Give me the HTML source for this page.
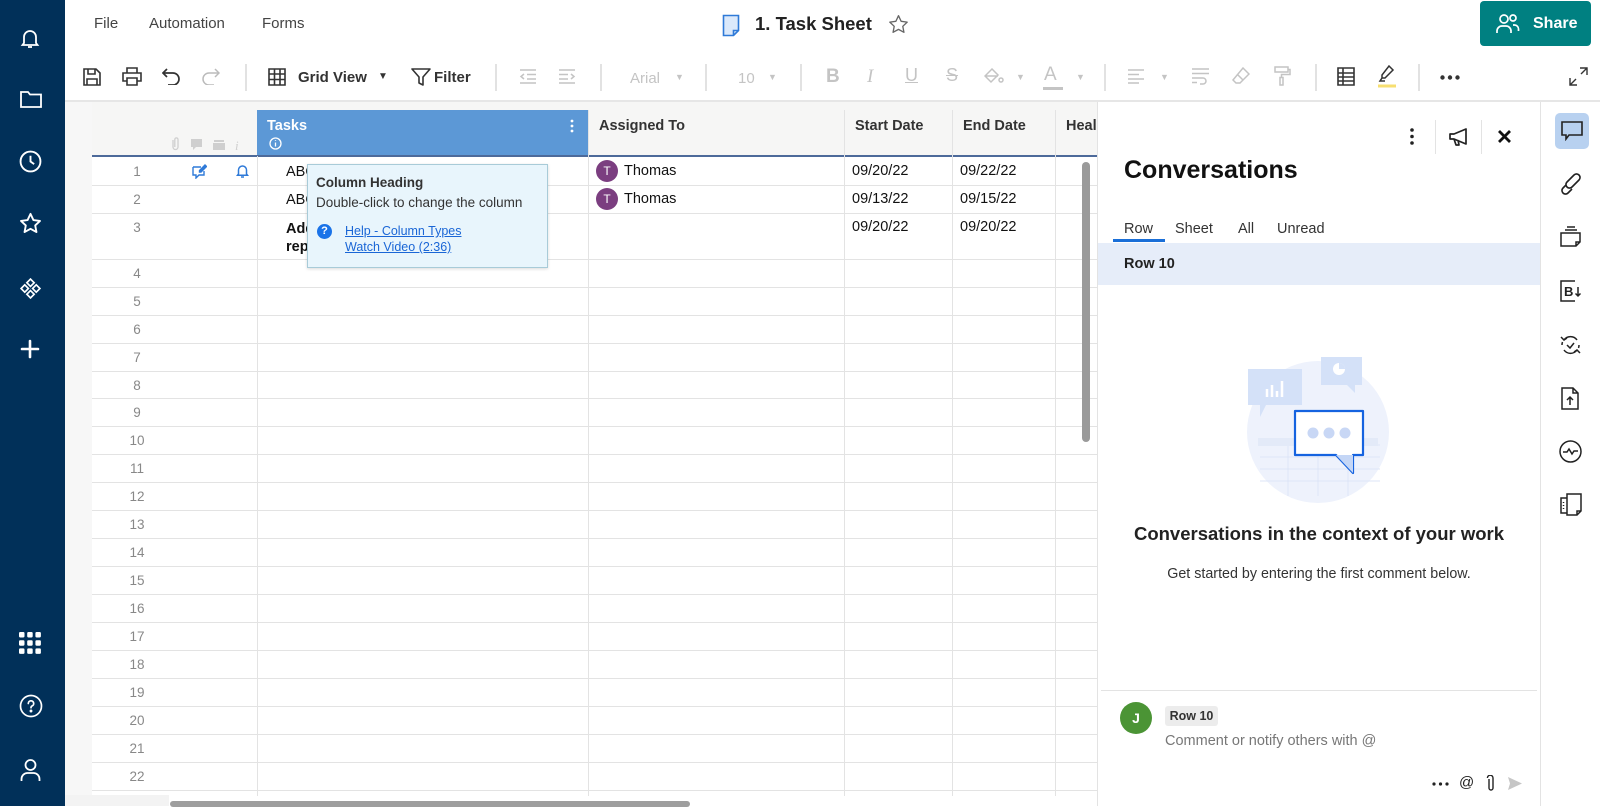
<!DOCTYPE html>
<html><head><meta charset="utf-8">
<style>
*{box-sizing:border-box;margin:0;padding:0}
body{width:1600px;height:806px;overflow:hidden;background:#fff;font-family:"Liberation Sans",Arial,sans-serif;color:#222;position:relative}
.a{position:absolute}
.side{left:0;top:0;width:65px;height:806px;background:#013059}
.side svg{position:absolute;left:19px}
.tb{color:#444;font-size:15px}
.sep{position:absolute;top:64px;width:2px;height:27px;background:#e2e2e2}
.g{color:#c4c4c4}
.hd{font-size:14.5px;font-weight:bold;color:#333}
.rn{position:absolute;left:92px;width:90px;text-align:center;font-size:13.5px;color:#888}
.hl{position:absolute;left:92px;width:1005px;height:1px;background:#e3e3e3}
.vl{position:absolute;width:1px;background:#e3e3e3}
.cell{position:absolute;font-size:14.5px;color:#111}
.ri svg{position:absolute}
</style></head><body>

<div class="a side">
<svg style="top:27px" width="22" height="22" viewBox="0 0 22 22" fill="none" stroke="#fff" stroke-width="1.8"><path d="M5 16V10a6 6 0 0 1 12 0v6l1.5 2h-15z"/><path d="M9 20h4"/></svg>
<svg style="top:88px" width="24" height="22" viewBox="0 0 24 22" fill="none" stroke="#fff" stroke-width="1.8"><path d="M2 4h7l2 2.5h11V19H2z"/></svg>
<svg style="top:150px" width="23" height="23" viewBox="0 0 22 22" fill="none" stroke="#fff" stroke-width="1.8"><circle cx="11" cy="11" r="9.5"/><path d="M11 5.5V11l3.5 2.5"/></svg>
<svg style="top:212px" width="23" height="23" viewBox="0 0 22 22" fill="none" stroke="#fff" stroke-width="1.8" stroke-linejoin="round"><path d="M11 1.8l2.8 5.9 6.3.8-4.6 4.4 1.2 6.3L11 16.1l-5.7 3.1 1.2-6.3L1.9 8.5l6.3-.8z"/></svg>
<svg style="top:277px" width="23" height="23" viewBox="0 0 22 22" fill="none" stroke="#fff" stroke-width="1.6"><path d="M11 2l3.5 3.5L11 9 7.5 5.5zM5.5 7.5L9 11l-3.5 3.5L2 11zM16.5 7.5L20 11l-3.5 3.5L13 11zM11 13l3.5 3.5L11 20l-3.5-3.5z"/></svg>
<svg style="top:338px" width="22" height="22" viewBox="0 0 22 22" stroke="#fff" stroke-width="2.6" stroke-linecap="round"><path d="M11 3v16M3 11h16"/></svg>
<svg style="top:632px" width="22" height="22" viewBox="0 0 22 22" fill="#fff"><rect x="0" y="0" width="5.5" height="5.5" rx="1.2"/><rect x="8.2" y="0" width="5.5" height="5.5" rx="1.2"/><rect x="16.4" y="0" width="5.5" height="5.5" rx="1.2"/><rect x="0" y="8.2" width="5.5" height="5.5" rx="1.2"/><rect x="8.2" y="8.2" width="5.5" height="5.5" rx="1.2"/><rect x="16.4" y="8.2" width="5.5" height="5.5" rx="1.2"/><rect x="0" y="16.4" width="5.5" height="5.5" rx="1.2"/><rect x="8.2" y="16.4" width="5.5" height="5.5" rx="1.2"/><rect x="16.4" y="16.4" width="5.5" height="5.5" rx="1.2"/></svg>
<svg style="top:694px" width="24" height="24" viewBox="0 0 24 24" fill="none" stroke="#fff" stroke-width="1.7"><circle cx="12" cy="12" r="10.5"/><path d="M9.3 9.5a2.7 2.7 0 1 1 3.7 2.5c-.8.4-1 .9-1 1.8" stroke-linecap="round"/><circle cx="12" cy="17" r=".6" fill="#fff"/></svg>
<svg style="top:758px" width="23" height="24" viewBox="0 0 22 24" fill="none" stroke="#fff" stroke-width="1.8"><circle cx="11" cy="7" r="5"/><path d="M2 23v-2a6 6 0 0 1 6-6h6a6 6 0 0 1 6 6v2"/></svg>
</div>

<div class="a tb" style="left:94px;top:15px">File</div>
<div class="a tb" style="left:149px;top:15px">Automation</div>
<div class="a tb" style="left:262px;top:15px">Forms</div>
<svg class="a" style="left:722px;top:14px" width="18" height="23" viewBox="0 0 18 23" fill="#dbe9fb" stroke="#2f7ad8" stroke-width="1.6"><path d="M1.5 1.5h15v15l-5 5h-10z"/><path d="M16.5 16.5h-5v5" fill="none"/></svg>
<div class="a" style="left:755px;top:13px;font-size:18.5px;font-weight:bold;color:#222">1. Task Sheet</div>
<svg class="a" style="left:888px;top:14px" width="21" height="21" viewBox="0 0 22 22" fill="none" stroke="#666" stroke-width="1.4" stroke-linejoin="round"><path d="M11 1.8l2.8 5.9 6.3.8-4.6 4.4 1.2 6.3L11 16.1l-5.7 3.1 1.2-6.3L1.9 8.5l6.3-.8z"/></svg>
<div class="a" style="left:1480px;top:1px;width:111px;height:45px;background:#008081;border-radius:4px;color:#fff;font-weight:bold;font-size:16px;line-height:45px;padding-left:53px">Share</div>
<svg class="a" style="left:1496px;top:13px" width="24" height="21" viewBox="0 0 24 21" fill="none" stroke="#fff" stroke-width="1.7"><circle cx="8" cy="6" r="4"/><path d="M1 20v-2a5 5 0 0 1 5-5h4a5 5 0 0 1 5 5v2"/><circle cx="17" cy="5" r="3"/><path d="M17 12h1.5a4 4 0 0 1 4 4v2"/></svg>

<svg class="a" style="left:83px;top:68px" width="18" height="18" viewBox="0 0 18 18" fill="none" stroke="#333" stroke-width="1.6"><path d="M1 1h12l4 4v12H1z"/><path d="M5 1v5h7V1M4 17v-6h10v6"/></svg>
<svg class="a" style="left:122px;top:67px" width="20" height="19" viewBox="0 0 20 19" fill="none" stroke="#333" stroke-width="1.6"><path d="M5 6V1h10v5M5 14H1V6h18v8h-4"/><path d="M5 11h10v7H5z"/></svg>
<svg class="a" style="left:162px;top:68px" width="18" height="17" viewBox="0 0 18 17" fill="none" stroke="#333" stroke-width="1.7"><path d="M5 1L1 5l4 4"/><path d="M1 5h10a6 6 0 0 1 0 12H6"/></svg>
<svg class="a" style="left:202px;top:68px" width="18" height="17" viewBox="0 0 18 17" fill="none" stroke="#bbb" stroke-width="1.5"><path d="M13 1l4 4-4 4"/><path d="M17 5H7a6 6 0 0 0 0 12h5"/></svg>
<div class="sep" style="left:245px"></div>
<svg class="a" style="left:268px;top:68px" width="18" height="18" viewBox="0 0 18 18" fill="none" stroke="#333" stroke-width="1.6"><path d="M1 1h16v16H1zM1 6h16M1 11.5h16M6.5 1v16M12 1v16"/></svg>
<div class="a" style="left:298px;top:69px;font-size:15px;font-weight:bold;color:#333">Grid View</div>
<div class="a" style="left:378px;top:71px;font-size:10px;color:#333">▼</div>
<svg class="a" style="left:411px;top:67px" width="20" height="20" viewBox="0 0 20 20" fill="none" stroke="#333" stroke-width="1.6" stroke-linejoin="round"><path d="M1 2h18l-7 8v8l-4-2v-6z"/></svg>
<div class="a" style="left:434px;top:69px;font-size:15px;font-weight:bold;color:#333">Filter</div>
<div class="sep" style="left:495px"></div>
<svg class="a" style="left:519px;top:69px" width="18" height="15" viewBox="0 0 18 15" fill="none" stroke="#c4c4c4" stroke-width="1.5"><path d="M1 1h16M8 5.5h9M8 10h9M1 14h16M5 5L2 7.5 5 10"/></svg>
<svg class="a" style="left:558px;top:69px" width="18" height="15" viewBox="0 0 18 15" fill="none" stroke="#c4c4c4" stroke-width="1.5"><path d="M1 1h16M1 5.5h9M1 10h9M1 14h16M13 5l3 2.5-3 2.5"/></svg>
<div class="sep" style="left:600px"></div>
<div class="a g" style="left:630px;top:70px;font-size:15px">Arial</div>
<div class="a g" style="left:675px;top:72px;font-size:9px">▼</div>
<div class="sep" style="left:705px"></div>
<div class="a g" style="left:738px;top:70px;font-size:15px">10</div>
<div class="a g" style="left:768px;top:72px;font-size:9px">▼</div>
<div class="sep" style="left:800px"></div>
<div class="a g" style="left:826px;top:66px;font-size:19px;font-weight:bold">B</div>
<div class="a g" style="left:867px;top:66px;font-size:19px;font-style:italic;font-family:'Liberation Serif',serif">I</div>
<div class="a g" style="left:905px;top:65px;font-size:18px;text-decoration:underline">U</div>
<div class="a g" style="left:946px;top:65px;font-size:18px;text-decoration:line-through">S</div>
<svg class="a" style="left:984px;top:68px" width="20" height="18" viewBox="0 0 20 18" fill="none" stroke="#c4c4c4" stroke-width="1.5"><path d="M8 1L1 8l6 6 7-7zM1 8h13"/><circle cx="17" cy="12" r="2"/></svg>
<div class="a g" style="left:1016px;top:72px;font-size:9px">▼</div>
<div class="a g" style="left:1044px;top:64px;font-size:19px">A</div>
<div class="a" style="left:1043px;top:87px;width:20px;height:3px;background:#c4c4c4"></div>
<div class="a g" style="left:1076px;top:72px;font-size:9px">▼</div>
<div class="sep" style="left:1104px"></div>
<svg class="a" style="left:1127px;top:69px" width="18" height="15" viewBox="0 0 18 15" fill="none" stroke="#c4c4c4" stroke-width="1.5"><path d="M1 1h16M1 5.5h11M1 10h16M1 14h11"/></svg>
<div class="a g" style="left:1160px;top:72px;font-size:9px">▼</div>
<svg class="a" style="left:1191px;top:68px" width="19" height="17" viewBox="0 0 19 17" fill="none" stroke="#c4c4c4" stroke-width="1.5"><path d="M1 1h17M1 5.5h17M1 10h11a3 3 0 0 1 0 6h-3M1 14.5h5"/></svg>
<svg class="a" style="left:1232px;top:67px" width="18" height="18" viewBox="0 0 18 18" fill="none" stroke="#c4c4c4" stroke-width="1.5"><path d="M11 1l6 6-9 9H4l-3-3zM5 7l6 6"/></svg>
<svg class="a" style="left:1274px;top:66px" width="17" height="20" viewBox="0 0 17 20" fill="none" stroke="#c4c4c4" stroke-width="1.5"><path d="M1 1h13v5H1zM14 3.5h2v5H7.5v3M6 11.5h3v7.5H6z"/></svg>
<div class="sep" style="left:1315px"></div>
<svg class="a" style="left:1337px;top:67px" width="18" height="19" viewBox="0 0 18 19" fill="none" stroke="#333" stroke-width="1.6"><path d="M1 1h16v17H1zM1 6h16M1 10h16M1 14h16M6 1v17"/></svg>
<svg class="a" style="left:1377px;top:65px" width="20" height="23" viewBox="0 0 20 23" fill="none" stroke="#333" stroke-width="1.5"><path d="M12 1l4 4-8 8H5v-3zM5 13l-2 3h5"/><path d="M1 21h18" stroke="#f7df71" stroke-width="3"/></svg>
<div class="sep" style="left:1418px"></div>
<svg class="a" style="left:1440px;top:75px" width="20" height="5" viewBox="0 0 20 5" fill="#333"><circle cx="2.5" cy="2.5" r="2.2"/><circle cx="10" cy="2.5" r="2.2"/><circle cx="17.5" cy="2.5" r="2.2"/></svg>
<svg class="a" style="left:1569px;top:67px" width="19" height="19" viewBox="0 0 19 19" fill="none" stroke="#333" stroke-width="1.4"><path d="M11 1h7v7M18 1l-6 6M8 18H1v-7M1 18l6-6"/></svg>
<div class="a" style="left:65px;top:100px;width:1535px;height:2px;background:#e6e6e6"></div>

<div class="a" style="left:65px;top:102px;width:27px;height:704px;background:#f7f7f7"></div>
<div class="a" style="left:92px;top:102px;width:1005px;height:54px;background:#f6f6f5"></div>
<div class="a" style="left:257px;top:110px;width:331px;height:46px;background:#5c98d6"></div>
<div class="a" style="left:267px;top:118px;font-size:14.5px;font-weight:bold;color:#fff">Tasks</div>
<svg class="a" style="left:269px;top:137px" width="13" height="13" viewBox="0 0 13 13" fill="none" stroke="#fff" stroke-width="1.3"><circle cx="6.5" cy="6.5" r="5.5"/><path d="M6.5 5.5v4M6.5 3.2v.8"/></svg>
<svg class="a" style="left:570px;top:119px" width="4" height="14" viewBox="0 0 4 14" fill="#fff"><circle cx="2" cy="2" r="1.4"/><circle cx="2" cy="7" r="1.4"/><circle cx="2" cy="12" r="1.4"/></svg>
<div class="a hd" style="left:599px;top:118px">Assigned To</div>
<div class="a hd" style="left:855px;top:118px">Start Date</div>
<div class="a hd" style="left:963px;top:118px">End Date</div>
<div class="a hd" style="left:1066px;top:118px">Heal</div>
<svg class="a" style="left:169px;top:137px" width="70" height="14" viewBox="0 0 70 14" fill="#cfcfcf"><path d="M4 3v7a2.5 2.5 0 0 0 5 0V2.5a1.6 1.6 0 0 0-3.2 0V10" fill="none" stroke="#cfcfcf" stroke-width="1.3"/><path d="M22 2h11v8h-6l-3 3v-3h-2z"/><path d="M45 3h10v2H45zM44 6h12v7H44z"/><text x="66" y="13" font-size="13" font-style="italic" font-family="Liberation Serif" fill="#cfcfcf">i</text></svg>
<div class="a" style="left:92px;top:155px;width:1005px;height:2px;background:#4d6a9a"></div>

<div class="hl" style="top:185px"></div>
<div class="hl" style="top:213px"></div>
<div class="hl" style="top:259px"></div>
<div class="hl" style="top:287px"></div><div class="hl" style="top:315px"></div><div class="hl" style="top:343px"></div><div class="hl" style="top:371px"></div><div class="hl" style="top:398px"></div><div class="hl" style="top:426px"></div><div class="hl" style="top:454px"></div><div class="hl" style="top:482px"></div><div class="hl" style="top:510px"></div><div class="hl" style="top:538px"></div><div class="hl" style="top:566px"></div><div class="hl" style="top:594px"></div><div class="hl" style="top:622px"></div><div class="hl" style="top:650px"></div><div class="hl" style="top:678px"></div><div class="hl" style="top:706px"></div><div class="hl" style="top:734px"></div><div class="hl" style="top:762px"></div><div class="hl" style="top:790px"></div>
<div class="vl" style="left:257px;top:156px;height:640px"></div>
<div class="vl" style="left:588px;top:110px;height:686px"></div>
<div class="vl" style="left:844px;top:110px;height:686px"></div>
<div class="vl" style="left:952px;top:110px;height:686px"></div>
<div class="vl" style="left:1055px;top:110px;height:686px"></div>

<div class="rn" style="top:164px">1</div><div class="rn" style="top:192px">2</div><div class="rn" style="top:220px">3</div>
<div class="rn" style="top:266px">4</div><div class="rn" style="top:294px">5</div><div class="rn" style="top:322px">6</div><div class="rn" style="top:350px">7</div><div class="rn" style="top:378px">8</div><div class="rn" style="top:405px">9</div><div class="rn" style="top:433px">10</div><div class="rn" style="top:461px">11</div><div class="rn" style="top:489px">12</div><div class="rn" style="top:517px">13</div><div class="rn" style="top:545px">14</div><div class="rn" style="top:573px">15</div><div class="rn" style="top:601px">16</div><div class="rn" style="top:629px">17</div><div class="rn" style="top:657px">18</div><div class="rn" style="top:685px">19</div><div class="rn" style="top:713px">20</div><div class="rn" style="top:741px">21</div><div class="rn" style="top:769px">22</div>

<svg class="a" style="left:192px;top:164px" width="15" height="15" viewBox="0 0 15 15" fill="none" stroke="#2f7ad8" stroke-width="1.4"><path d="M1 3h8M1 3v8h3v3l3-3h5V7"/><path d="M13 1l1.5 1.5L9 8H7.5V6.5z" fill="#2f7ad8"/></svg>
<svg class="a" style="left:236px;top:164px" width="13" height="14" viewBox="0 0 13 14" fill="none" stroke="#2f7ad8" stroke-width="1.5"><path d="M2.5 10V6a4 4 0 0 1 8 0v4l1 1.3h-10z"/><path d="M5 13h3"/></svg>

<div class="cell" style="left:286px;top:164px">ABC</div>
<div class="cell" style="left:286px;top:192px">ABC</div>
<div class="cell" style="left:286px;top:220px;font-weight:bold;line-height:18px">Add<br>rep</div>
<div class="a" style="left:596px;top:160px;width:22px;height:22px;border-radius:50%;background:#7b3e80;color:#fff;font-size:12px;text-align:center;line-height:22px">T</div>
<div class="cell" style="left:624px;top:163px">Thomas</div>
<div class="a" style="left:596px;top:188px;width:22px;height:22px;border-radius:50%;background:#7b3e80;color:#fff;font-size:12px;text-align:center;line-height:22px">T</div>
<div class="cell" style="left:624px;top:191px">Thomas</div>
<div class="cell" style="left:852px;top:163px">09/20/22</div><div class="cell" style="left:960px;top:163px">09/22/22</div>
<div class="cell" style="left:852px;top:191px">09/13/22</div><div class="cell" style="left:960px;top:191px">09/15/22</div>
<div class="cell" style="left:852px;top:219px">09/20/22</div><div class="cell" style="left:960px;top:219px">09/20/22</div>

<div class="a" style="left:307px;top:164px;width:241px;height:104px;background:#e8f5fc;border:1px solid #a8cbd8;box-shadow:0 1px 3px rgba(0,0,0,.15)"></div>
<div class="a" style="left:316px;top:175px;font-size:13.5px;font-weight:bold;color:#333">Column Heading</div>
<div class="a" style="left:316px;top:195px;font-size:13.5px;color:#333">Double-click to change the column</div>
<div class="a" style="left:317px;top:224px;width:15px;height:15px;border-radius:50%;background:#1a73e8;color:#fff;font-size:11px;font-weight:bold;text-align:center;line-height:15px">?</div>
<div class="a" style="left:345px;top:224px;font-size:12.5px;color:#1a66d6;text-decoration:underline">Help - Column Types</div>
<div class="a" style="left:345px;top:240px;font-size:12.5px;color:#1a66d6;text-decoration:underline">Watch Video (2:36)</div>

<div class="a" style="left:1082px;top:162px;width:8px;height:280px;border-radius:4px;background:#9a9a9a"></div>
<div class="a" style="left:65px;top:795px;width:104px;height:11px;background:#f3f3f3"></div>
<div class="a" style="left:170px;top:801px;width:520px;height:6px;border-radius:3px;background:#9e9e9e"></div>

<div class="a" style="left:1097px;top:102px;width:1px;height:704px;background:#e3e3e3"></div>
<div class="a" style="left:1540px;top:102px;width:1px;height:704px;background:#e3e3e3"></div>
<svg class="a" style="left:1410px;top:128px" width="4" height="17" viewBox="0 0 4 17" fill="#222"><circle cx="2" cy="2" r="1.8"/><circle cx="2" cy="8.5" r="1.8"/><circle cx="2" cy="15" r="1.8"/></svg>
<div class="a" style="left:1435px;top:120px;width:1px;height:34px;background:#e3e3e3"></div>
<svg class="a" style="left:1448px;top:127px" width="22" height="20" viewBox="0 0 22 20" fill="none" stroke="#222" stroke-width="1.7" stroke-linejoin="round"><path d="M2 7h4l12-5v15L6 12H2zM6 12l2 6h3l-1-5"/></svg>
<div class="a" style="left:1481px;top:120px;width:1px;height:34px;background:#e3e3e3"></div>
<svg class="a" style="left:1497px;top:129px" width="15" height="15" viewBox="0 0 15 15" stroke="#111" stroke-width="2.8"><path d="M2 2l11 11M13 2L2 13"/></svg>
<div class="a" style="left:1124px;top:156px;font-size:25px;font-weight:bold;color:#111">Conversations</div>
<div class="a" style="left:1124px;top:221px;font-size:14.5px;color:#333">Row</div>
<div class="a" style="left:1175px;top:221px;font-size:14.5px;color:#333">Sheet</div>
<div class="a" style="left:1238px;top:221px;font-size:14.5px;color:#333">All</div>
<div class="a" style="left:1277px;top:221px;font-size:14.5px;color:#333">Unread</div>
<div class="a" style="left:1113px;top:239px;width:52px;height:3px;background:#1a6fd8"></div>
<div class="a" style="left:1098px;top:243px;width:442px;height:42px;background:#e6edf9"></div>
<div class="a" style="left:1124px;top:256px;font-size:14.5px;font-weight:bold;color:#222">Row 10</div>

<svg class="a" style="left:1238px;top:355px" width="160" height="150" viewBox="0 0 160 150">
<circle cx="80" cy="77" r="71" fill="#eef2fc"/>
<g stroke="#dde5f7" stroke-width="1" fill="none"><path d="M22 90h120M22 102h120M22 114h120M22 126h120M50 86v55M80 86v55M110 86v55"/></g>
<rect x="20" y="83" width="120" height="8" fill="#e3eaf8"/>
<path d="M10 14h54v36H28l-6 12V50H10z" fill="#d4e1f8"/>
<path d="M29 42v-8M34 42v-12M39 42v-6M44 42v-16" stroke="#fff" stroke-width="2.5"/>
<path d="M83 2h41v28h-7v8l-8-8H83z" fill="#d4e1f8"/>
<circle cx="101" cy="14" r="6" fill="#fff"/><path d="M101 14V8a6 6 0 0 1 6 6z" fill="#d4e1f8"/>
<path d="M57 56h68v44h-10v18l-17-18H57z" fill="#fff" stroke="#1563e0" stroke-width="2.2" stroke-linejoin="round"/>
<path d="M115 100v18l-17-18z" fill="#c4d6f6"/>
<circle cx="75" cy="78" r="5.5" fill="#c8d7f5"/><circle cx="91" cy="78" r="5.5" fill="#c8d7f5"/><circle cx="107" cy="78" r="5.5" fill="#c8d7f5"/>
</svg>
<div class="a" style="left:1098px;top:523px;width:442px;text-align:center;font-size:18.5px;font-weight:bold;color:#222">Conversations in the context of your work</div>
<div class="a" style="left:1098px;top:566px;width:442px;text-align:center;font-size:14.3px;color:#333">Get started by entering the first comment below.</div>
<div class="a" style="left:1101px;top:690px;width:436px;height:1px;background:#e3e3e3"></div>
<div class="a" style="left:1120px;top:702px;width:32px;height:32px;border-radius:50%;background:#4b9435;color:#fff;font-size:14px;font-weight:bold;text-align:center;line-height:32px">J</div>
<div class="a" style="left:1165px;top:706px;width:53px;height:20px;border-radius:3px;background:#ececec;font-size:12.5px;font-weight:bold;color:#333;text-align:center;line-height:20px">Row 10</div>
<div class="a" style="left:1165px;top:733px;font-size:14.5px;color:#777">Comment or notify others with @</div>
<svg class="a" style="left:1432px;top:782px" width="17" height="4" viewBox="0 0 17 4" fill="#222"><circle cx="2" cy="2" r="1.6"/><circle cx="8.5" cy="2" r="1.6"/><circle cx="15" cy="2" r="1.6"/></svg>
<div class="a" style="left:1459px;top:774px;font-size:15px;color:#222">@</div>
<svg class="a" style="left:1486px;top:775px" width="10" height="18" viewBox="0 0 10 18" fill="none" stroke="#222" stroke-width="1.4"><path d="M3 4v9a2 2 0 0 0 4 0V3a2.8 2.8 0 0 0-5.6 0"/></svg>
<svg class="a" style="left:1507px;top:776px" width="16" height="15" viewBox="0 0 16 15" fill="#c6c6c6"><path d="M1 1l14 6.5L1 14l2-6.5z"/></svg>

<div class="ri">
<div class="a" style="left:1555px;top:113px;width:34px;height:36px;border-radius:5px;background:#b8d1f0"></div>
<svg style="left:1561px;top:121px" width="22" height="20" viewBox="0 0 22 20" fill="none" stroke="#222" stroke-width="1.6"><path d="M1 1h20v13H8l-3 4v-4H1z"/></svg>
<svg style="left:1561px;top:173px" width="20" height="22" viewBox="0 0 20 22" fill="none" stroke="#222" stroke-width="1.6"><path d="M9 6l4-4a3.5 3.5 0 0 1 5 5l-7 7a3.5 3.5 0 0 1-5-5l5-5M11 16l-4 4a3.5 3.5 0 0 1-5-5l3-3"/></svg>
<svg style="left:1560px;top:226px" width="21" height="22" viewBox="0 0 21 22" fill="none" stroke="#222" stroke-width="1.5"><path d="M7 1h8M5 4h12M1 7h19v9l-4 4H1zM20 16h-4v4"/></svg>
<svg style="left:1560px;top:280px" width="22" height="22" viewBox="0 0 22 22" fill="none" stroke="#222" stroke-width="1.5"><path d="M15 1H1v20h14"/><text x="4" y="16" font-size="13" font-weight="bold" fill="#222" stroke="none" font-family="Liberation Sans">B</text><path d="M18 7v9M15.5 13.5L18 16l2.5-2.5"/></svg>
<svg style="left:1560px;top:334px" width="21" height="22" viewBox="0 0 21 22" fill="none" stroke="#222" stroke-width="1.5"><path d="M4 6a8 8 0 0 1 13 0M17 16a8 8 0 0 1-13 0M2 11a8 8 0 0 1 .5-3M19 11a8 8 0 0 1-.5 3"/><path d="M7 11l3 3 4-5"/><path d="M1 3l3 3 3-2M20 19l-3-3-3 2"/></svg>
<svg style="left:1561px;top:387px" width="18" height="23" viewBox="0 0 18 23" fill="none" stroke="#222" stroke-width="1.5"><path d="M1 1h11l5 5v16H1zM12 1v5h5M9 18V10M6 13l3-3 3 3"/></svg>
<svg style="left:1559px;top:440px" width="23" height="23" viewBox="0 0 23 23" fill="none" stroke="#222" stroke-width="1.5"><circle cx="11.5" cy="11.5" r="10.5"/><path d="M4 12h4l2-3 3 5 2-3h4"/></svg>
<svg style="left:1560px;top:493px" width="22" height="23" viewBox="0 0 22 23" fill="none" stroke="#222" stroke-width="1.5"><path d="M7 1h14v17l-4 4H7z"/><path d="M21 18h-4v4"/><path d="M7 5H1v15h6M3.5 9v1M3.5 12v1M3.5 15v1"/></svg>
</div>
</body></html>
